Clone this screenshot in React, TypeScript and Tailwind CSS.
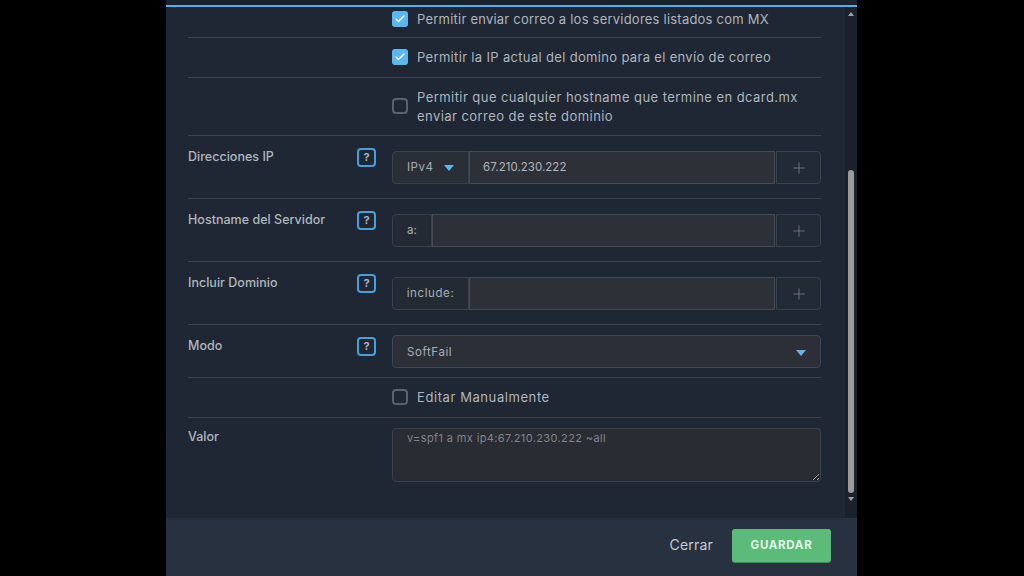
import { Check, Plus } from 'lucide-react';

const font = { fontFamily: 'Inter, "Open Sans", sans-serif' };

function Help() {
  return (
    <div className="ml-[169px] flex h-[19px] w-[19px] shrink-0 items-center justify-center rounded-[4px] border-2 border-[#4b9fd8] text-[11px] font-bold leading-none text-[#a9b4c0]">
      ?
    </div>
  );
}

function CheckRow({ checked, className, children }: { checked?: boolean; className: string; children: React.ReactNode }) {
  return (
    <div className={`flex items-center border-b border-[#3a4450] pl-[204px] ${className}`}>
      {checked ? (
        <div className="flex h-[16px] w-[16px] shrink-0 items-center justify-center rounded-[3px] bg-[#5bb8ef]">
          <Check className="h-[12px] w-[12px] text-white" strokeWidth={3} />
        </div>
      ) : (
        <div className="h-[16px] w-[16px] shrink-0 rounded-[4px] border-2 border-[#59626e]" />
      )}
      <div className="ml-[9px] pt-[1px] text-[13px] leading-[19px] text-[#b0b6be]">{children}</div>
    </div>
  );
}

function AddRow({ label, labelClass, value, prefix }: { label: string; labelClass: string; value?: string; prefix: React.ReactNode }) {
  return (
    <div className="flex h-[63px] border-b border-[#3a4450] pt-[15px]">
      <div className="-mt-[2px] w-[169px] shrink-0 text-[12.5px] font-medium leading-[15px] tracking-[0.02px] text-[#b0b6be]">{label}</div>
      <div className="-ml-[169px] flex h-[33px] w-full">
        <div className="-mt-[3px]"><Help /></div>
        <div className="ml-[16px] flex h-[33px] w-[429px]">
          <div className={`flex h-full shrink-0 items-center rounded-l-[4px] border border-[#39414d] pt-[2px] text-[11.5px] text-[#a9afb7] ${labelClass}`}>
            {prefix}
          </div>
          <div className="flex h-full min-w-0 flex-1 items-center border border-[#454b55] bg-[#2e3037] pl-[13px] pt-[2px] text-[11.5px] tracking-[0.04px] text-[#b0b5bb]">
            {value}
          </div>
          <div className="ml-[1px] flex h-full w-[45px] shrink-0 items-center justify-center rounded-r-[4px] border border-[#39414d] bg-[#222a35] pt-[1px]">
            <Plus className="h-[18px] w-[18px] text-[#78808a]" strokeWidth={1.1} />
          </div>
        </div>
      </div>
    </div>
  );
}

export default function App() {
  return (
    <div className="flex h-[576px] w-[1024px] overflow-hidden bg-black" style={font}>
      <div className="ml-[166px] flex h-full w-[691px] flex-col bg-[#1e2733]">
        <div className="h-[5px] shrink-0 bg-[#1b222c]" />
        <div className="h-[2px] shrink-0 bg-[#5aaee4]" />
        <div className="flex h-[511px] shrink-0">
          <div className="w-[679px] shrink-0 pl-[22px] pr-[24px]">
            <CheckRow checked className="h-[31px] pb-[7px]"><span className="tracking-[0.22px]">Permitir enviar correo a los servidores listados com MX</span></CheckRow>
            <CheckRow checked className="h-[39.5px]"><span className="tracking-[0.33px]">Permitir la IP actual del domino para el envío de correo</span></CheckRow>
            <CheckRow className="h-[58px]">
              <span className="tracking-[0.44px]">
                Permitir que cualquier hostname que termine en dcard.mx
                <br />
                enviar correo de este dominio
              </span>
            </CheckRow>
            <AddRow
              label="Direcciones IP"
              labelClass="w-[77px] justify-between bg-[#2a2e37] pl-[14px] pr-[14px] tracking-[0.5px]"
              value="67.210.230.222"
              prefix={
                <>
                  <span>IPv4</span>
                  <span className="h-0 w-0 border-x-[5.5px] border-t-[6px] border-x-transparent border-t-[#5bb8ef]" />
                </>
              }
            />
            <AddRow label="Hostname del Servidor" labelClass="w-[40px] justify-center bg-[#242a33]" prefix="a:" />
            <AddRow label="Incluir Dominio" labelClass="w-[77px] justify-center bg-[#242a33] tracking-[0.6px]" prefix="include:" />
            <div className="flex h-[53.5px] border-b border-[#3a4450] pt-[10px]">
              <div className="w-[169px] shrink-0 pt-[3px] text-[12.5px] font-medium leading-[15px] tracking-[0.02px] text-[#b0b6be]">Modo</div>
              <div className="-ml-[169px] flex w-full">
                <div className="mt-[2px]"><Help /></div>
                <div className="ml-[16px] flex h-[33px] w-[429px] items-center justify-between rounded-[4px] border border-[#3d4856] bg-[#2c2f38] pl-[14px] pr-[14px] pt-[3px] text-[11.5px] tracking-[0.6px] text-[#a9afb7]">
                  <span>SoftFail</span>
                  <span className="h-0 w-0 border-x-[5.5px] border-t-[6px] border-x-transparent border-t-[#5bb8ef]" />
                </div>
              </div>
            </div>
            <CheckRow className="h-[39.5px]"><span className="tracking-[0.58px]">Editar Manualmente</span></CheckRow>
            <div className="flex pt-[10px]">
              <div className="w-[204px] shrink-0 pt-[1px] text-[12.5px] font-medium leading-[15px] tracking-[0.02px] text-[#b0b6be]">Valor</div>
              <textarea
                readOnly
                value="v=spf1 a mx ip4:67.210.230.222 ~all"
                className="h-[54px] w-[429px] rounded-[4px] border border-[#3a414b] bg-[#292c33] px-[14px] py-[2px] text-[11px] leading-[15px] tracking-[0.37px] text-[#7f858d] outline-none"
                style={font}
              />
            </div>
          </div>
          <div className="flex w-[12px] shrink-0 flex-col items-center bg-[#1a212b]">
            <span className="mt-[5px] h-0 w-0 border-x-[3px] border-b-[4px] border-x-transparent border-b-[#a0a0a0]" />
            <div className="mt-[154px] h-[323px] w-[6px] rounded-full bg-[#9a9a9a]" />
            <span className="mt-[4px] h-0 w-0 border-x-[3px] border-t-[4px] border-x-transparent border-t-[#a0a0a0]" />
          </div>
        </div>
        <div className="flex h-[58px] shrink-0 items-start justify-end bg-[#273140] pr-[26px] pt-[11px]">
          <span className="mr-[19px] mt-[7px] text-[14px] leading-[18px] tracking-[0.2px] text-[#c5cbd2]">Cerrar</span>
          <button className="h-[33px] w-[99px] rounded-[3px] bg-[#5dbb7a] pt-[1px] text-[11.5px] font-bold tracking-[0.7px] text-[#e3f3e8] shadow-[0_1px_0_#3f8f58]">
            GUARDAR
          </button>
        </div>
      </div>
    </div>
  );
}
